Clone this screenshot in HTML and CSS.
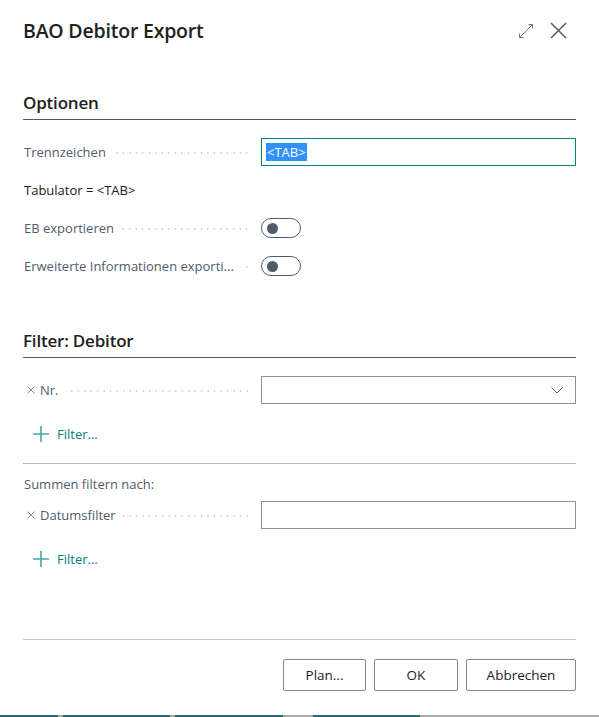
FILE: index.html
```html
<!DOCTYPE html>
<html>
<head>
	<title>BAO Debitor Export</title>
	<link rel="stylesheet" href="styles.css">
</head>
<body>
	<div class="dialog">
		<div class="header">
			<h1 class="title">BAO Debitor Export</h1>
			<div class="header-icons">
				<svg class="icon-expand" width="16" height="16" viewBox="0 0 16 16">
					<path d="M1.5 14.5 L14.5 1.5 M10.5 1.5 H14.5 V5.5 M1.5 10.5 V14.5 H5.5" fill="none" stroke="#7a7a7a" stroke-width="1"/>
				</svg>
				<svg class="icon-close" width="17" height="17" viewBox="0 0 17 17">
					<path d="M1 1 L16 16 M16 1 L1 16" fill="none" stroke="#616161" stroke-width="1.6"/>
				</svg>
			</div>
		</div>

		<h2 class="section-title">Optionen</h2>
		<div class="row">
			<div class="label"><span>Trennzeichen</span></div>
			<div class="field"><div class="input focused"><span class="selected">&lt;TAB&gt;</span></div></div>
		</div>
		<div class="row">
			<div class="plain">Tabulator = &lt;TAB&gt;</div>
		</div>
		<div class="row">
			<div class="label"><span>EB exportieren</span></div>
			<div class="field"><div class="toggle"><i></i></div></div>
		</div>
		<div class="row">
			<div class="label"><span class="clip">Erweiterte Informationen exporti...</span></div>
			<div class="field"><div class="toggle"><i></i></div></div>
		</div>

		<h2 class="section-title second">Filter: Debitor</h2>
		<div class="row">
			<div class="label">
				<span><svg class="remove" width="8" height="8" viewBox="0 0 8 8"><path d="M0.5 0.5 L7.5 7.5 M7.5 0.5 L0.5 7.5" stroke="#8a8f98" stroke-width="1"/></svg>Nr.</span>
			</div>
			<div class="field">
				<div class="input">
					<svg class="chevron" width="12" height="7" viewBox="0 0 12 7">
						<path d="M0.5 0.5 L6 6 L11.5 0.5" fill="none" stroke="#505c6d" stroke-width="1"/>
					</svg>
				</div>
			</div>
		</div>
		<div class="row link-row">
			<svg class="plus" width="16" height="16" viewBox="0 0 16 16">
				<path d="M8 0 V16 M0 8 H16" stroke="#4aa6a6" stroke-width="1.6"/>
			</svg>
			<span class="link">Filter...</span>
		</div>
		<div class="divider"></div>
		<div class="subhead">Summen filtern nach:</div>
		<div class="row">
			<div class="label">
				<span><svg class="remove" width="8" height="8" viewBox="0 0 8 8"><path d="M0.5 0.5 L7.5 7.5 M7.5 0.5 L0.5 7.5" stroke="#8a8f98" stroke-width="1"/></svg>Datumsfilter</span>
			</div>
			<div class="field"><div class="input"></div></div>
		</div>
		<div class="row link-row">
			<svg class="plus" width="16" height="16" viewBox="0 0 16 16">
				<path d="M8 0 V16 M0 8 H16" stroke="#4aa6a6" stroke-width="1.6"/>
			</svg>
			<span class="link">Filter...</span>
		</div>

		<div class="footer">
			<button class="btn plan">Plan...</button>
			<button class="btn ok">OK</button>
			<button class="btn cancel">Abbrechen</button>
		</div>
	</div>
	<div class="taskbar">
		<span style="width:58px"></span><span class="gap" style="width:5px"></span>
		<span style="width:107px"></span><span class="gap" style="width:5px"></span>
		<span style="width:108px"></span><span class="gap" style="width:30px"></span>
		<span style="width:107px"></span><span class="gap" style="flex:1"></span>
	</div>
</body>
</html>
```
FILE: styles.css
```css
body {
	margin: 0;
	background: #ffffff;
	font-family: "Open Sans", "Noto Sans", sans-serif;
	color: #212121;
	height: 717px;
	display: flex;
	flex-direction: column;
}
.dialog {
	flex: 1;
	padding: 0 23px;
}
.header {
	height: 60px;
	display: flex;
	align-items: center;
	justify-content: space-between;
}
.title {
	margin: 0;
	font-size: 19.5px;
	font-weight: 600;
	color: #212121;
	letter-spacing: -0.2px;
}
.header-icons {
	display: flex;
	align-items: center;
	gap: 16px;
	margin-right: 9px;
	margin-top: 1px;
}
.section-title {
	margin: 31px 0 0 0;
	height: 24px;
	line-height: 24px;
	padding-bottom: 4px;
	border-bottom: 1px solid #505c6d;
	font-size: 17px;
	font-weight: 600;
	color: #212121;
	letter-spacing: -0.2px;
}
.section-title.second {
	margin-top: 44px;
}
.section-title + .row {
	margin-top: 13px;
}
.row {
	height: 38px;
	display: flex;
	align-items: center;
	font-size: 13px;
}
.label {
	width: 227px;
	margin-right: 11px;
	display: flex;
	align-items: center;
	color: #505c6d;
	overflow: hidden;
	white-space: nowrap;
}
.label span {
	flex-shrink: 0;
	display: flex;
	align-items: center;
	padding-right: 7px;
	padding-left: 1px;
}
.label::after {
	content: "";
	flex: 1;
	height: 2px;
	margin-top: 2px;
	background-image: radial-gradient(circle, #c8ccd2 0.8px, transparent 1.1px);
	background-size: 6.5px 2px;
	background-position: right center;
}
.remove {
	margin-left: 3px;
	margin-right: 5px;
}
.field {
	flex: 1;
}
.input {
	height: 26px;
	border: 1px solid #8a929c;
	display: flex;
	align-items: center;
	justify-content: space-between;
	padding: 0 5px;
}
.input.focused {
	border-color: #00847f;
}
.selected {
	background: #3390ff;
	color: #ffffff;
	font-size: 13px;
	line-height: 18px;
	padding: 0 1px;
	margin-left: -1px;
}
.chevron {
	margin-left: auto;
	margin-right: 7px;
}
.toggle {
	width: 38px;
	height: 18px;
	border: 1px solid #505c6d;
	border-radius: 10px;
	display: flex;
	align-items: center;
}
.toggle i {
	width: 11px;
	height: 11px;
	margin-left: 5px;
	border-radius: 50%;
	background: #505c6d;
}
.plain {
	padding-left: 1px;
	color: #212121;
}
.link-row {
	margin-top: 6px;
	padding-left: 10px;
}
.plus {
	margin-right: 8px;
}
.link {
	color: #00807f;
}
.divider {
	margin-top: 10px;
	height: 1px;
	background: #b8bcc2;
}
.subhead {
	margin-top: 8px;
	height: 24px;
	line-height: 24px;
	font-size: 13px;
	color: #505c6d;
	padding-left: 1px;
}
.footer {
	margin-top: 61px;
	border-top: 1px solid #c8c8c8;
	padding-top: 19px;
	display: flex;
	justify-content: flex-end;
	gap: 8px;
}
.btn {
	height: 32px;
	background: #ffffff;
	border: 1px solid #8a8886;
	border-radius: 2px;
	font-family: "Open Sans", "Noto Sans", sans-serif;
	font-size: 13.5px;
	font-weight: 400;
	color: #212121;
}
.btn.plan { width: 83px; }
.btn.ok { width: 84px; }
.btn.cancel { width: 110px; }
.taskbar {
	height: 2px;
	display: flex;
}
.taskbar span {
	background: #2e6b6b;
}
.taskbar span.gap {
	background: #a8a8a8;
}
```
